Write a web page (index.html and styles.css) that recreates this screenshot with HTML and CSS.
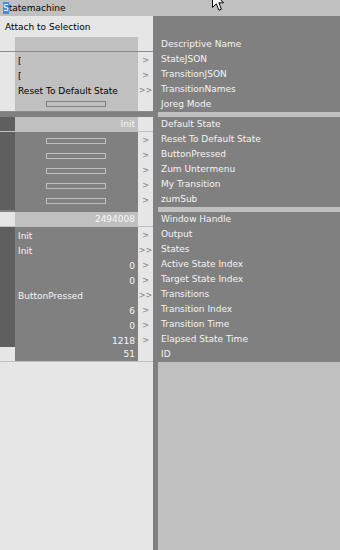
FILE: index.html
```html
<!DOCTYPE html>
<html lang="en">
<head>
    <meta charset="UTF-8">
    <title>Statemachine</title>
    <link rel="stylesheet" href="styles.css">
</head>
<body>
    <div class="titlebar"><span class="caret">S</span>tatemachine</div>

    <div class="patch">
        <div class="pins">
            <div class="attach">Attach to Selection</div>

            <div class="group inputs">
                <div class="row"><span class="tab"></span><span class="val"></span><span class="arrow"></span></div>
                <div class="row"><span class="tab"></span><span class="val">[</span><span class="arrow">&gt;</span></div>
                <div class="row"><span class="tab"></span><span class="val">[</span><span class="arrow">&gt;</span></div>
                <div class="row"><span class="tab"></span><span class="val">Reset To Default State</span><span class="arrow">&gt;&gt;</span></div>
                <div class="row"><span class="tab"></span><span class="val"><i class="bang"></i></span><span class="arrow"></span></div>
            </div>

            <div class="sep"></div>

            <div class="group dark">
                <div class="row"><span class="tab"></span><span class="val lit right">Init</span><span class="arrow"></span></div>
                <div class="row"><span class="tab"></span><span class="val"><i class="bang"></i></span><span class="arrow">&gt;</span></div>
                <div class="row"><span class="tab"></span><span class="val"><i class="bang"></i></span><span class="arrow">&gt;</span></div>
                <div class="row"><span class="tab"></span><span class="val"><i class="bang"></i></span><span class="arrow">&gt;</span></div>
                <div class="row"><span class="tab"></span><span class="val"><i class="bang"></i></span><span class="arrow">&gt;</span></div>
                <div class="row"><span class="tab"></span><span class="val"><i class="bang"></i></span><span class="arrow">&gt;</span></div>
            </div>

            <div class="sep sep-out"><span></span></div>

            <div class="group dark">
                <div class="row"><span class="tab light"></span><span class="val lit right">2494008</span><span class="arrow"></span></div>
                <div class="row"><span class="tab"></span><span class="val">Init</span><span class="arrow">&gt;</span></div>
                <div class="row"><span class="tab"></span><span class="val">Init</span><span class="arrow">&gt;&gt;</span></div>
                <div class="row"><span class="tab"></span><span class="val right">0</span><span class="arrow">&gt;</span></div>
                <div class="row"><span class="tab"></span><span class="val right">0</span><span class="arrow">&gt;</span></div>
                <div class="row"><span class="tab"></span><span class="val">ButtonPressed</span><span class="arrow">&gt;&gt;</span></div>
                <div class="row"><span class="tab"></span><span class="val right">6</span><span class="arrow">&gt;</span></div>
                <div class="row"><span class="tab"></span><span class="val right">0</span><span class="arrow">&gt;</span></div>
                <div class="row"><span class="tab"></span><span class="val right">1218</span><span class="arrow">&gt;</span></div>
                <div class="row"><span class="tab light"></span><span class="val right">51</span><span class="arrow"></span></div>
            </div>
        </div>

        <div class="names">
            <div class="name-list">
                <div class="name-head"></div>
                <div class="name">Descriptive Name</div>
                <div class="name">StateJSON</div>
                <div class="name">TransitionJSON</div>
                <div class="name">TransitionNames</div>
                <div class="name">Joreg Mode</div>
                <div class="bar"></div>
                <div class="name">Default State</div>
                <div class="name">Reset To Default State</div>
                <div class="name">ButtonPressed</div>
                <div class="name">Zum Untermenu</div>
                <div class="name">My Transition</div>
                <div class="name">zumSub</div>
                <div class="bar"></div>
                <div class="name">Window Handle</div>
                <div class="name">Output</div>
                <div class="name">States</div>
                <div class="name">Active State Index</div>
                <div class="name">Target State Index</div>
                <div class="name">Transitions</div>
                <div class="name">Transition Index</div>
                <div class="name">Transition Time</div>
                <div class="name">Elapsed State Time</div>
                <div class="name">ID</div>
            </div>
        </div>
    </div>

    <svg class="pointer" width="12" height="20" viewBox="0 0 12 20">
        <path d="M0.5 0.5 L0.5 16.5 L4.3 12.8 L7 19.2 L9.4 18.2 L6.8 11.8 L11.5 11.8 Z" fill="#fff" stroke="#000" stroke-width="1"/>
    </svg>
</body>
</html>
```

FILE: styles.css
```css
body {
    margin: 0;
    width: 340px;
    height: 550px;
    overflow: hidden;
    position: relative;
    font-family: "DejaVu Sans", Verdana, sans-serif;
    font-size: 9px;
    background: #e6e6e6;
}
.titlebar {
    height: 16px;
    line-height: 16px;
    padding-left: 3px;
    background: #c0c0c0;
    color: #000;
}
.caret {
    background: #3d8ee6;
    color: #fff;
    padding: 1px 0;
}
.patch {
    display: flex;
    height: 534px;
}
.pins {
    width: 153px;
    background: #e6e6e6;
}
.attach {
    height: 21px;
    line-height: 22px;
    padding-left: 5px;
    color: #000;
}
.row {
    display: grid;
    grid-template-columns: 15px 123px 15px;
    height: 14px;
    line-height: 14px;
    border-bottom: 1px solid #c0c0c0;
}
.inputs .row {
    border-bottom-color: #8c8c8c;
}
.tab {
    background: #e6e6e6;
}
.val {
    background: #c0c0c0;
    color: #000;
    padding: 0 3px;
    white-space: nowrap;
    overflow: hidden;
    display: flex;
    align-items: center;
}
.val.right {
    justify-content: flex-end;
}
.arrow {
    background: #e6e6e6;
    color: #808080;
    text-align: center;
    font-size: 8px;
    line-height: 18px;
}
.dark .tab {
    background: #5f5f5f;
}
.dark .tab.light {
    background: #e6e6e6;
}
.dark .val {
    background: #808080;
    color: #f6f6f6;
}
.dark .val.lit {
    background: #c0c0c0;
}
.bang {
    display: block;
    width: 58px;
    height: 4px;
    margin-left: 28px;
    border: 1px solid #808080;
}
.dark .bang {
    border-color: #c0c0c0;
}
.sep {
    height: 5px;
    background: #808080;
}
.sep-out {
    display: flex;
    justify-content: flex-end;
}
.sep-out span {
    width: 15px;
    background: #e6e6e6;
}
.names {
    flex: 1;
    border-left: 5px solid #808080;
    background: #c0c0c0;
}
.name-list {
    background: #808080;
    margin-left: -5px;
    padding-left: 5px;
}
.name-head {
    height: 21px;
}
.name {
    height: 15px;
    line-height: 15px;
    padding-left: 3px;
    color: #f4f4f4;
    white-space: nowrap;
}
.bar {
    height: 5px;
    background: #c0c0c0;
}
.pointer {
    position: absolute;
    left: 212px;
    top: -9px;
}
```
